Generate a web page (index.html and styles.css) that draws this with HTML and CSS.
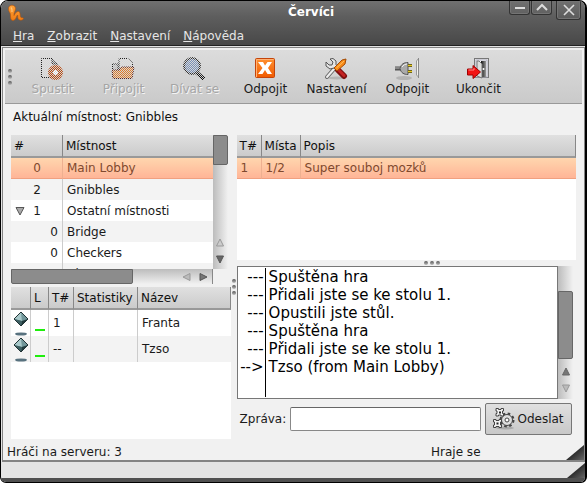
FILE: index.html
```html
<!DOCTYPE html>
<html lang="cs">
<head>
<meta charset="utf-8">
<title>Červíci</title>
<link rel="stylesheet" href="styles.css">
</head>
<body>
<svg class="defs" aria-hidden="true">
  <defs>
    <pattern id="checker" width="2" height="2" patternUnits="userSpaceOnUse">
      <rect width="1" height="1" fill="#fff" shape-rendering="crispEdges"/>
      <rect x="1" y="1" width="1" height="1" fill="#fff" shape-rendering="crispEdges"/>
    </pattern>
    <mask id="stipple" maskUnits="userSpaceOnUse" x="0" y="0" width="24" height="24"><rect width="24" height="24" fill="url(#checker)"/></mask>
    <linearGradient id="orange" x2="0" y2="1"><stop offset="0" stop-color="#ff9030"/><stop offset="1" stop-color="#f05a00"/></linearGradient>
    <linearGradient id="door"><stop offset="0" stop-color="#111"/><stop offset="1" stop-color="#999"/></linearGradient>
    <linearGradient id="worm" x2="0" y2="1"><stop offset="0" stop-color="#ffa43c"/><stop offset="1" stop-color="#f07c14"/></linearGradient>
    <linearGradient id="grip" x2="1" y2="1"><stop offset="0.4" stop-color="#222"/><stop offset="1" stop-color="#666"/></linearGradient>
    <symbol id="gem" viewBox="0 0 18 26">
      <path d="M9 2 16 9 9 16 2 9Z" fill="#5c8084" stroke="#102022"/>
      <path d="M9 2 16 9 10 11Z" fill="#71969a"/>
      <path d="M9 2 2 9 10 11Z" fill="#a9c9ca"/>
      <path d="M2 9 10 11 9 16Z" fill="#3d5f62"/>
      <path d="M10 11 16 9 9 16Z" fill="#213a3d"/>
      <path d="M9 2 16 9 9 16 2 9Z" fill="none" stroke="#203234"/>
      <ellipse cx="9" cy="24" rx="6" ry="1.6" fill="#58727f"/>
    </symbol>
  </defs>
</svg>
<div class="window">
  <header class="chrome">
    <div class="titlebar">
      <svg class="logo" width="18" height="18" viewBox="0 0 18 18"><path d="M1.500 5C1 0 8.500 0 8.500 4.500 8.500 7 6.500 9 7 11.500 8 9.500 9.500 7 11.500 7.500 14 8 12.500 12.500 14 13.500 15 14 16 13.500 16.500 14.500 16 16.500 12 17 11 14.500 10.500 13 11 11.500 10.500 11 9.500 11.500 9 16.500 6 16.500 2.500 16.500 4 10.500 3 9 2 7.500 1.500 6.500 1.500 5Z" fill="url(#worm)" stroke="#b8560c" stroke-width=".6"/><path d="M4 3.500Q5.500 5 5 8" fill="none" stroke="#ffc77c" stroke-width="1.200"/></svg>
      <h1>Červíci</h1>
      <div class="controls">
        <button aria-label="Minimalizovat"><svg width="12" height="12"><path d="M1 6H11" stroke="#ddd" stroke-width="2"/></svg></button>
        <button aria-label="Maximalizovat"><svg width="12" height="12"><path d="M1 8 6 3 11 8" fill="none" stroke="#ddd" stroke-width="2"/></svg></button>
        <button class="close" aria-label="Zavřít"><svg width="12" height="12"><path d="M1 1 11 11M11 1 1 11" stroke="#ddd" stroke-width="1.600"/></svg></button>
      </div>
    </div>
    <nav class="menu">
      <button><u>H</u>ra</button><button><u>Z</u>obrazit</button><button><u>N</u>astavení</button><button><u>N</u>ápověda</button>
    </nav>
  </header>
  <main class="client">
    <div class="toolbar">
      <span class="dots"><i></i><i></i><i></i></span>
      <button class="tool" disabled>
        <svg width="24" height="24"><g mask="url(#stipple)"><path d="M1.500 1.500H12L17 7V20.500H1.500Z" fill="#ddd" stroke="#222"/><path d="M12 1.500V7H17" fill="#777" stroke="#222"/><circle cx="15.500" cy="15.500" r="5" fill="#fff" stroke="#b8480c" stroke-width="5"/></g></svg>
        Spustit</button>
      <button class="tool" disabled>
        <svg width="24" height="24"><g mask="url(#stipple)"><path d="M1.500 7H7V20H1.500Z" fill="#bbb" stroke="#222"/><path d="M8 1.500H17L21.500 6V12H8Z" fill="#ddd" stroke="#222"/><path d="M1 13H8L10 10H23L21 21.500H2Z" fill="#e07a28" stroke="#522"/></g></svg>
        Připojit</button>
      <button class="tool" disabled>
        <svg width="24" height="24"><g mask="url(#stipple)"><path d="M14 15 22 22" stroke="#111" stroke-width="4"/><circle cx="10" cy="9" r="8" fill="#7890b8" stroke="#333" stroke-width="2"/></g></svg>
        Dívat se</button>
      <button class="tool">
        <svg width="24" height="24"><rect x="2.500" y="1.500" width="19" height="19" rx="1" fill="url(#orange)" stroke="#c4440a"/><path d="M3.500 20V2.500H20.500" fill="none" stroke="#ffb274"/><path d="M5 5H10L12 8.500 14.500 5H19L15 11 19 17H14.500L12 13 9.500 17H5L9.500 11Z" fill="#fff"/></svg>
        Odpojit</button>
      <button class="tool">
        <svg width="24" height="24"><ellipse cx="13" cy="21" rx="9" ry="1.500" fill="#b5b5b5"/><path d="M3 20 10 12" stroke="#666" stroke-width="4" stroke-linecap="round"/><path d="M3 20 10 12" stroke="#eee" stroke-width="2" stroke-linecap="round"/><path d="M6 2 9 5 8 8 5 8 2 5 2 9 6 12 10 11 13 14 15 11 12 8 12 4 9 1.500Z" fill="#e5e5e5" stroke="#555"/><path d="M14 13 20 19" stroke="#7e1010" stroke-width="6" stroke-linecap="round"/><path d="M14 12.500 20 18.500" stroke="#c42222" stroke-width="3" stroke-linecap="round"/><path d="M10 11 13 14 21 7 22 2 18 3Z" fill="#f98a16" stroke="#a34b05"/><path d="M12.500 11 20 4" stroke="#ffc05e"/></svg>
        Nastavení</button>
      <button class="tool">
        <svg width="24" height="24"><ellipse cx="9" cy="21" rx="8" ry="2" fill="#b4b4b4"/><path d="M0 11.500H7" stroke="#555" stroke-width="4"/><path d="M0 11H7" stroke="#bbb"/><path d="M5 11.500C6 7 9 5.500 13 5.500V17.500C9 17.500 6 16 5 11.500Z" fill="#aaa" stroke="#555"/><path d="M7 10Q9 7 12 7" stroke="#eee" fill="none"/><path d="M13 8.500H17M13 14.500H17" stroke="#6d6520" stroke-width="3"/><path d="M13 8.500H17M13 14.500H17" stroke="#e9ca1c" stroke-width="1"/><path d="M21.500 4V18L23.500 20V1.500Z" fill="#f3f3ed" stroke="#999"/><path d="M23.500 1V21" stroke="#888"/></svg>
        Odpojit</button>
      <button class="tool">
        <svg width="24" height="24"><rect x="8.500" y="1.500" width="14" height="19" fill="#eee" stroke="#777"/><rect x="10" y="3" width="11" height="17" fill="#fff" stroke="#aab"/><rect x="15" y="4" width="5" height="16" fill="url(#door)"/><path d="M11 4H13L16 7V21L11 19Z" fill="#ddd" stroke="#777"/><circle cx="17.500" cy="12" r="1" fill="#fff"/><path d="M1.500 12H7V8.500L14.500 15 7 21.500V18H1.500Z" fill="#f21414" stroke="#a00000"/><path d="M2.500 13H8V11" fill="none" stroke="#ff8a8a"/></svg>
        Ukončit</button>
    </div>
    <p class="room">Aktuální místnost: Gnibbles</p>
    <div class="panes">
      <div class="left">
        <section class="rooms">
          <div class="clip">
            <table class="list tree">
              <colgroup><col class="w-num"><col></colgroup>
              <thead><tr><th>#</th><th>Místnost</th></tr></thead>
              <tbody>
                <tr class="selected"><td class="top">0</td><td>Main Lobby</td></tr>
                <tr><td class="top">2</td><td>Gnibbles</td></tr>
                <tr><td class="top open"><button class="expander" aria-label="Sbalit"><svg width="10" height="9"><path d="M1 .5H9L5 8Z" fill="#aaa" stroke="#555"/></svg></button>1</td><td>Ostatní místnosti</td></tr>
                <tr><td class="child">0</td><td>Bridge</td></tr>
                <tr><td class="child">0</td><td>Checkers</td></tr>
                <tr><td class="child">0</td><td>Chess</td></tr>
              </tbody>
            </table>
          </div>
          <div class="vscroll rooms-v"><span class="thumb"></span><svg width="10" height="9"><path d="M5 1 8.500 8H1.500Z" fill="#ccc" stroke="#999"/></svg><svg width="10" height="9"><path d="M1.500 1H8.500L5 8Z" fill="#666" stroke="#555"/></svg></div>
          <div class="hscroll"><span class="thumb"></span><svg width="9" height="10"><path d="M8 1.500V8.500L1 5Z" fill="#bbb" stroke="#999"/></svg><svg width="9" height="10"><path d="M1 1.500V8.500L8 5Z" fill="#777" stroke="#555"/></svg></div>
        </section>
        <section class="players">
          <table class="list">
            <colgroup><col class="w-icon"><col class="w-l"><col class="w-t"><col class="w-stat"><col></colgroup>
            <thead><tr><th></th><th>L</th><th>T#</th><th>Statistiky</th><th>Název</th></tr></thead>
            <tbody>
              <tr><td class="gem"><svg width="18" height="26"><use href="#gem"/></svg></td><td class="lag"><i></i></td><td>1</td><td></td><td>Franta</td></tr>
              <tr><td class="gem"><svg width="18" height="26"><use href="#gem"/></svg></td><td class="lag"><i></i></td><td>--</td><td></td><td>Tzso</td></tr>
            </tbody>
          </table>
        </section>
      </div>
      <div class="splitter vertical"><span class="dots"><i></i><i></i><i></i></span></div>
      <div class="right">
        <section class="games">
          <table class="list">
            <colgroup><col class="w-game"><col class="w-seats"><col></colgroup>
            <thead><tr><th>T#</th><th>Místa</th><th>Popis</th></tr></thead>
            <tbody><tr class="selected"><td>1</td><td>1/2</td><td>Super souboj mozků</td></tr></tbody>
          </table>
        </section>
        <div class="splitter horizontal"><span class="dots"><i></i><i></i><i></i></span></div>
        <section class="chat">
          <div class="log">
            <div class="marks"><span>---</span><span>---</span><span>---</span><span>---</span><span>---</span><span>--&gt;</span></div>
            <div class="lines"><span>Spuštěna hra</span><span>Přidali jste se ke stolu 1.</span><span>Opustili jste stůl.</span><span>Spuštěna hra</span><span>Přidali jste se ke stolu 1.</span><span>Tzso (from Main Lobby)</span></div>
          </div>
          <div class="vscroll chat-v"><span class="thumb"></span><svg width="10" height="9"><path d="M5 1 8.500 8H1.500Z" fill="#777" stroke="#666"/></svg><svg width="10" height="9"><path d="M1.500 1H8.500L5 8Z" fill="#bbb" stroke="#999"/></svg></div>
        </section>
        <form class="message">
          <label for="msg">Zpráva:</label>
          <input id="msg" type="text">
          <button type="button"><svg width="22" height="22" viewBox="0 0 22 22"><ellipse cx="12" cy="20" rx="9" ry="1.500" fill="#aaa"/><g fill="#f4f4f4" stroke="#444"><circle cx="14" cy="12" r="6" stroke-width="3" stroke-dasharray="2.400 2.300"/><circle cx="14" cy="12" r="5.500" fill="#ddd"/><circle cx="14" cy="12" r="2" fill="#fff"/><path d="M3 .5H5.500V1.500H8V.5H10.500V3H9.500V5.500H10.500V8H8V7H5.500V8H3V5.500H4V3H3Z"/><path d="M.5 11.500H3V12.500H6V11.500H8.500V14H7.500V17H8.500V19.500H6V18.500H3V19.500H.5V17H1.500V14H.5Z"/></g><path d="M6 3.500H8V5.500H6ZM3.500 14.500H5.500V16.500H3.500Z" fill="#222"/></svg>Odeslat</button>
        </form>
      </div>
    </div>
    <footer class="status"><span>Hráči na serveru: 3</span><span>Hraje se</span></footer>
    <svg class="grip inner" width="18" height="15"><path d="M0 15 18 0V15Z" fill="url(#grip)"/></svg>
  </main>
  <div class="edge"></div>
  <svg class="grip outer" width="18" height="15"><path d="M0 15 18 0V15Z" fill="url(#grip)"/></svg>
</div>
</body>
</html>
```
FILE: styles.css
```css
* { box-sizing: border-box; }
body {
  margin: 0;
  background: #fff;
  color: #1a1a1a;
  font: 12px/16px "DejaVu Sans", sans-serif;
}
button { font: inherit; color: inherit; background: none; border: 0; padding: 0; }
svg { display: block; flex: none; }
.defs { position: absolute; width: 0; height: 0; }

.window {
  position: relative;
  display: flex;
  flex-direction: column;
  height: 100vh;
  min-height: 440px;
  border: 1px solid #000;
  border-right-width: 2px;
  border-radius: 8px 8px 6px 6px;
  overflow: hidden;
  background: #e4e4e4;
}
.chrome {
  height: 45px;
  background: linear-gradient(#707070, #5e5e5e 35%, #484848);
  border-bottom: 1px solid #222;
  color: #e6e6e6;
}
.titlebar {
  display: grid;
  grid-template-columns: 112px 1fr 76px;
  height: 24px;
}
.logo { margin: 3px 0 0 6px; }
h1 { margin: 3px 0 0; font-size: 12px; line-height: 17px; text-align: center; color: #fff; }
.controls { display: flex; align-items: flex-start; gap: 1px; }
.controls button {
  display: grid;
  place-items: center;
  width: 21px;
  height: 14px;
  border: 1px solid #333;
  border-top: 0;
  border-radius: 0 0 3px 3px;
  box-shadow: inset 0 0 0 1px #747474;
}
.controls .close { width: 25px; height: 19px; margin-left: 3px; }
.menu { display: flex; gap: 13px; padding: 3px 12px; }

.client {
  position: relative;
  flex: 1;
  display: flex;
  flex-direction: column;
  min-height: 0;
  margin: 1px 0 0 1px;
  padding: 2px 2px 0;
  border: 1px solid #848484;
  border-bottom-width: 2px;
  background: #f1f1f1;
}
.toolbar {
  display: flex;
  align-items: center;
  height: 54px;
  padding-left: 3px;
  border-bottom: 1px solid #999;
  background: linear-gradient(#dcdcdc, #cacaca);
}
.dots { display: flex; flex-direction: column; gap: 2px; }
.dots i { width: 4px; height: 4px; border-radius: 2px; background: linear-gradient(#555, #bbb); }
.toolbar .dots { margin-right: 5px; }
.tool {
  display: flex;
  flex-direction: column;
  align-items: center;
  width: 71px;
}
.tool svg { margin-right: 1px; }
.tool:disabled { color: #a5a5a5; text-shadow: 1px 1px #f4f4f4; }
.room { margin: 5px 0 0; padding-left: 8px; color: #111; }

.panes { flex: 1; display: flex; min-height: 0; margin-top: 10px; padding: 0 6px; }
.left { flex: 220; display: flex; flex-direction: column; gap: 3px; min-width: 0; }
.right { flex: 340; display: flex; flex-direction: column; min-width: 0; }

.list { width: 100%; border-collapse: separate; border-spacing: 0; table-layout: fixed; }
.list th {
  height: 23px;
  padding: 0 3px;
  font-weight: normal;
  text-align: left;
  color: #111;
  background: linear-gradient(#e0e0e0, #cbcbcb);
  border-right: 1px solid #888;
  border-bottom: 2px solid #999;
}
.list td {
  height: 21px;
  padding: 0 4px;
  border-right: 1px solid #ccc;
  white-space: nowrap;
}
.list td:last-child { border-right: 0; }
.list tr:nth-child(even) td { background: #f3f3f3; }
.list .selected td {
  color: #80492e;
  background: linear-gradient(#ffd6ae, #ffb597);
  border-right-color: #eeb090;
  border-bottom: 1px solid #f0a080;
}
.w-num { width: 52px; }
.w-icon { width: 20px; }
.w-l { width: 18px; }
.w-t { width: 25px; }
.w-stat { width: 64px; }
.w-game { width: 25px; }
.w-seats { width: 39px; }

.rooms { display: grid; grid-template: 134px 15px / 1fr 15px; margin-right: 3px; }
.clip { overflow: hidden; background: #fff; }
.tree th:last-child { border-right: 0; }
.tree tbody .top { text-align: right; padding-right: 21px; }
.tree tbody .child { text-align: right; padding-right: 4px; }
.expander { float: left; margin-top: 4px; }

.vscroll, .hscroll { display: flex; align-items: center; }
.vscroll { flex-direction: column; gap: 8px; background: linear-gradient(90deg, #bcbcbc, #f1f1f1); }
.hscroll { gap: 8px; padding-right: 4px; background: linear-gradient(#bcbcbc, #f1f1f1); border-right: 1px solid #888; }
.thumb { background: #8c8c8c; border: 1px solid #666; border-radius: 0 0 2px 2px; }
.vscroll .thumb { width: 100%; margin-bottom: auto; border-radius: 0 2px 2px 0; }
.hscroll .thumb { width: 62%; height: 100%; margin-right: auto; }
.rooms-v { padding-bottom: 5px; }
.rooms-v .thumb { height: 30px; }

.players { flex: 1; background: #fff; }
.players td { height: 26px; }
.players .gem { padding: 0 1px; }
.lag { vertical-align: bottom; }
.lag i { display: block; width: 10px; height: 2px; margin-bottom: 5px; background: #1fee0c; }

.splitter { display: flex; align-items: center; justify-content: center; }
.splitter.vertical { width: 6px; }
.splitter.horizontal { height: 6px; padding-left: 52px; }
.horizontal .dots { flex-direction: row; }

.games { height: 125px; background: #fff; }
.chat { flex: 1; display: flex; min-height: 0; margin-right: 3px; }
.log {
  flex: 1;
  display: grid;
  grid-template-columns: 28px 1fr;
  padding: 1px 0;
  border: 1px solid #777;
  background: #fff;
  color: #000;
  font-size: 15px;
  line-height: 18px;
}
.log span { display: block; white-space: nowrap; }
.marks { text-align: right; border-right: 1px solid #000; padding-right: 1px; }
.lines { padding-left: 3px; }
.chat-v { width: 15px; padding: 25px 0 6px; }
.chat-v .thumb { height: 72px; }

.message { display: flex; align-items: center; gap: 4px; padding: 4px 4px 4px 3px; }
.message input {
  flex: 1;
  min-width: 0;
  height: 24px;
  border: 1px solid #888;
  border-top-color: #666;
  border-radius: 2px;
  background: #fff;
  font: inherit;
}
.message button {
  display: flex;
  align-items: center;
  justify-content: center;
  gap: 2px;
  width: 87px;
  height: 32px;
  border: 1px solid #777;
  border-radius: 2px;
  background: linear-gradient(#e0e0e0, #c8c8c8);
}
.status {
  display: grid;
  grid-template-columns: 427fr 150fr;
  padding: 5px 2px 0;
  height: 21px;
}
.edge { height: 20px; border-bottom: 4px solid #505050; }
.grip { position: absolute; right: 0; }
.grip.inner { bottom: 0; }
.grip.outer { bottom: 4px; }
```
